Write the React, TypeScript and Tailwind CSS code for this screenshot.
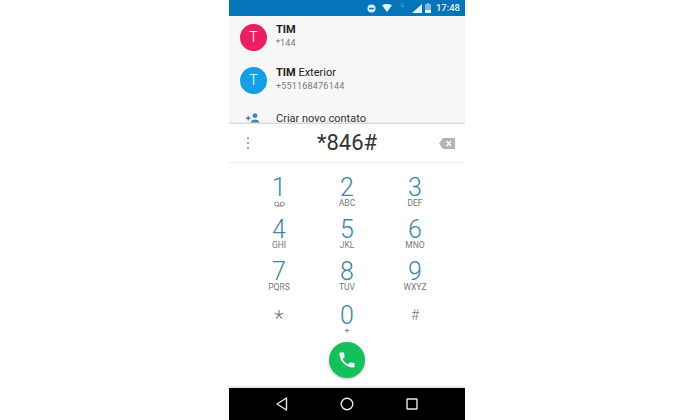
const keys = [
  ['1', 'voicemail'],
  ['2', 'ABC'],
  ['3', 'DEF'],
  ['4', 'GHI'],
  ['5', 'JKL'],
  ['6', 'MNO'],
  ['7', 'PQRS'],
  ['8', 'TUV'],
  ['9', 'WXYZ'],
  ['*', ''],
  ['0', '+'],
  ['#', ''],
];

function Voicemail() {
  return (
    <svg width="11" height="6" viewBox="0 0 22 12" fill="none" stroke="#888" strokeWidth="2">
      <circle cx="5.5" cy="6" r="4" />
      <circle cx="16.5" cy="6" r="4" />
      <path d="M5.5 10h11" />
    </svg>
  );
}

function Contact({ color, name, extra, phone }: { color: string; name: string; extra?: string; phone: string }) {
  return (
    <div className="flex h-[43px] items-center">
      <div
        className={`ml-[11px] flex h-[27px] w-[27px] shrink-0 items-center justify-center rounded-full text-[15px] font-light text-white ${color}`}
      >
        T
      </div>
      <div className="mb-[4px] ml-[9px]">
        <div className="text-[11px] leading-[14px] text-[#222]">
          <span className="font-bold">{name}</span>
          {extra && <span> {extra}</span>}
        </div>
        <div className="text-[9px] leading-[12px] tracking-[0.2px] text-[#777]">{phone}</div>
      </div>
    </div>
  );
}

export default function App() {
  return (
    <div className="flex h-[420px] w-[695px] justify-center overflow-hidden bg-white font-['Roboto',sans-serif]">
      <div className="ml-[-1px] flex h-full w-[236px] flex-col overflow-hidden">
        <div className="flex h-[16px] shrink-0 items-center justify-end bg-[#0574b8] pr-[5px] text-white">
          <svg width="9" height="9" viewBox="0 0 10 10" className="mr-[6px]">
            <circle cx="5" cy="5" r="4.5" fill="#dcebf5" />
            <rect x="2.3" y="4.2" width="5.4" height="1.6" fill="#0574b8" />
          </svg>
          <svg width="10" height="8" viewBox="0 0 10 8" className="mr-[8px]">
            <path d="M0 1.2Q5 -1 10 1.2L5 8Z" fill="#e4f0f8" />
          </svg>
          <span className="mb-[5px] mr-[8px] text-[5px] leading-none text-[#6fb0d8]">G</span>
          <svg width="10" height="9" viewBox="0 0 10 9" className="mr-[3px]">
            <path d="M0 9L10 0V9Z" fill="#e4f0f8" />
          </svg>
          <svg width="6" height="10" viewBox="0 0 6 10" className="mr-[5px]">
            <path d="M2 0h2v1h2v9H0V1h2Z" fill="#7fb6da" />
            <rect x="0" y="7" width="6" height="3" fill="#e4f0f8" />
          </svg>
          <span className="text-[9.5px] font-medium leading-none text-[#e6f1f8]">17:48</span>
        </div>

        <div className="h-[108px] shrink-0 overflow-hidden bg-[#f7f7f7]">
          <Contact color="bg-[#e91e63]" name="TIM" phone="*144" />
          <Contact color="bg-[#129fe6]" name="TIM" extra="Exterior" phone="+551168476144" />
          <div className="flex h-[22px] items-end">
            <div className="ml-[16px] flex h-[11px] items-start">
              <svg width="15" height="10" viewBox="0 0 15 10" fill="#3f88ad">
                <path d="M2.5 3h1.4v1.6h1.600V6H3.900v1.600H2.500V6H.9V4.600h1.600Z" />
                <circle cx="10" cy="2.7" r="2.4" />
                <path d="M5.800 9.600c0-2.200 2.200-3.200 4.200-3.200s4.200 1 4.200 3.200Z" />
              </svg>
            </div>
            <div className="ml-[16px] text-[11px] leading-[11px] text-[#333]">Criar novo contato</div>
          </div>
        </div>

        <div className="relative flex h-[39px] shrink-0 items-center border-b border-[#efefef] bg-white shadow-[0_-1px_2px_rgba(0,0,0,0.18)]">
          <div className="flex w-[36px] flex-col items-center gap-[3px] pl-[2px]">
            <span className="h-[2px] w-[2px] rounded-full bg-[#8a8a8a]" />
            <span className="h-[2px] w-[2px] rounded-full bg-[#8a8a8a]" />
            <span className="h-[2px] w-[2px] rounded-full bg-[#8a8a8a]" />
          </div>
          <div className="flex-1 text-center text-[22px] leading-none text-[#333]">*846#</div>
          <div className="flex w-[36px] justify-end pr-[10px]">
            <svg width="16" height="11" viewBox="0 0 16 11">
              <path d="M4 0h12v11H4L0 5.500Z" fill="#b5b5b5" />
              <path d="M7.500 3l4.500 5M12 3L7.500 8" stroke="#fff" strokeWidth="1.300" />
            </svg>
          </div>
        </div>

        <div className="flex min-h-0 flex-1 flex-col items-center bg-white">
          <div className="mt-[8px] grid w-[204px] grid-cols-3">
            {keys.map(([digit, letters], i) => (
              <div key={digit} className={i >= 9 ? 'mt-[2px] flex h-[42px] flex-col items-center justify-center' : 'flex h-[42px] flex-col items-center justify-center'}>
                {digit === '*' ? (
                  <div className="pt-[5px] text-[22px] font-light leading-[23px] text-[#777]">{digit}</div>
                ) : digit === '#' ? (
                  <div className="text-[14px] font-light leading-[23px] text-[#777]">{digit}</div>
                ) : (
                  <div className="text-[25px] font-light leading-[23px] text-[#3a88a8]">{digit}</div>
                )}
                <div className="flex h-[9px] items-center text-[8.5px] leading-[9px] text-[#777]">
                  {letters === 'voicemail' ? <Voicemail /> : letters}
                </div>
              </div>
            ))}
          </div>
          <div className="mt-[1px] flex h-[36px] w-[36px] items-center justify-center rounded-full bg-[#14c05c] shadow-[0_1px_3px_rgba(0,0,0,0.25)]">
            <svg width="20" height="20" viewBox="0 0 24 24" fill="#fff">
              <path d="M6.600 10.800c1.400 2.800 3.800 5.100 6.600 6.600l2.200-2.200c.3-.3.7-.4 1-.2 1.100.4 2.300.6 3.600.6.600 0 1 .4 1 1V20c0 .6-.4 1-1 1C10.600 21 3 13.400 3 4c0-.6.400-1 1-1h3.500c.6 0 1 .4 1 1 0 1.300.2 2.500.6 3.600.1.300 0 .7-.2 1Z" />
            </svg>
          </div>
        </div>

        <div className="h-[2px] shrink-0 bg-[#e4e4e4]" />
        <div className="flex h-[32px] shrink-0 items-center justify-center gap-[47px] bg-black">
          <svg width="18" height="18" viewBox="0 0 18 18" fill="none" stroke="#e8e8e8" strokeWidth="1.400">
            <path d="M13.500 3V15L4 9Z" strokeLinejoin="round" />
          </svg>
          <svg width="18" height="18" viewBox="0 0 18 18" fill="none" stroke="#e8e8e8" strokeWidth="1.400">
            <circle cx="9" cy="9" r="5.800" />
          </svg>
          <svg width="18" height="18" viewBox="0 0 18 18" fill="none" stroke="#e8e8e8" strokeWidth="1.400">
            <rect x="4" y="4" width="10" height="10" rx="0.5" />
          </svg>
        </div>
      </div>
    </div>
  );
}
